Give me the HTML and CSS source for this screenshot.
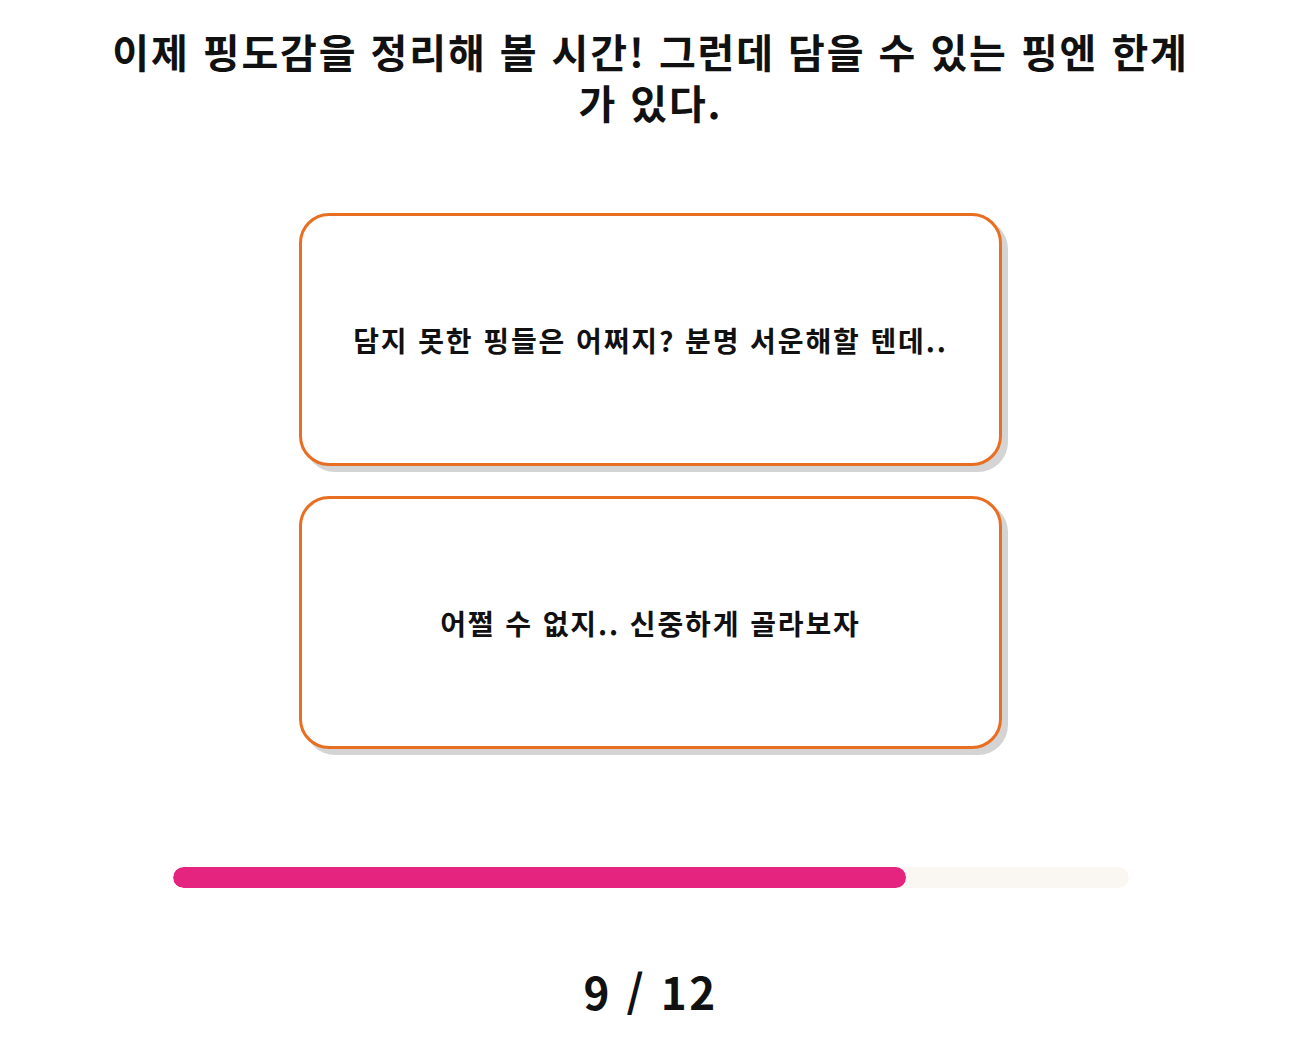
FILE: index.html
```html
<!DOCTYPE html>
<html lang="ko">
<head>
  <meta charset="UTF-8" />
  <meta name="viewport" content="width=device-width, initial-scale=1" />
  <title>핑도감</title>
  <link rel="stylesheet" href="styles.css">
</head>
<body>

  <main class="quiz">
    <h1 class="question">이제 핑도감을 정리해 볼 시간! 그런데 담을 수 있는 핑엔 한계가 있다.</h1>

    <div class="answers">
      <button class="answer">담지 못한 핑들은 어쩌지? 분명 서운해할 텐데..</button>
      <button class="answer">어쩔 수 없지.. 신중하게 골라보자</button>
    </div>

    <div class="progress">
      <div class="progress-fill" style="width: 76.7%"></div>
    </div>

    <div class="counter">9 / 12</div>
  </main>

</body>
</html>
```

FILE: styles.css
```css
body {
  margin: 0;
  padding-right: 5px;
  background-color: #ffffff;
  color: #111111;
  font-family: 'Noto Sans CJK KR', 'Noto Sans', sans-serif;
}

.quiz {
  max-width: 1100px;
  margin: 0 auto;
  padding-top: 26px;
  display: flex;
  flex-direction: column;
  align-items: center;
}

.question {
  margin: 0;
  font-size: 40px;
  font-weight: 700;
  line-height: 51px;
  letter-spacing: 1.9px;
  text-align: center;
}

.answers {
  margin-top: 85px;
  display: flex;
  flex-direction: column;
  gap: 30px;
}

.answer {
  width: 703px;
  height: 253px;
  background: #ffffff;
  border: 3px solid #e86f22;
  border-radius: 30px;
  box-shadow: 6px 6px 0 #d4d4d4;
  font-family: inherit;
  font-size: 28px;
  font-weight: 700;
  letter-spacing: 1.9px;
  color: #111111;
  cursor: pointer;
}

.answer:hover {
  background: #fff6ef;
}

.progress {
  margin-top: 118px;
  width: 956px;
  height: 21px;
  background: #faf7f2;
  border-radius: 11px;
  overflow: hidden;
}

.progress-fill {
  height: 100%;
  background: #e5247f;
  border-radius: 11px;
}

.counter {
  margin-top: 73px;
  font-size: 44px;
  font-weight: 700;
  line-height: 60px;
  letter-spacing: 2.4px;
}
```
